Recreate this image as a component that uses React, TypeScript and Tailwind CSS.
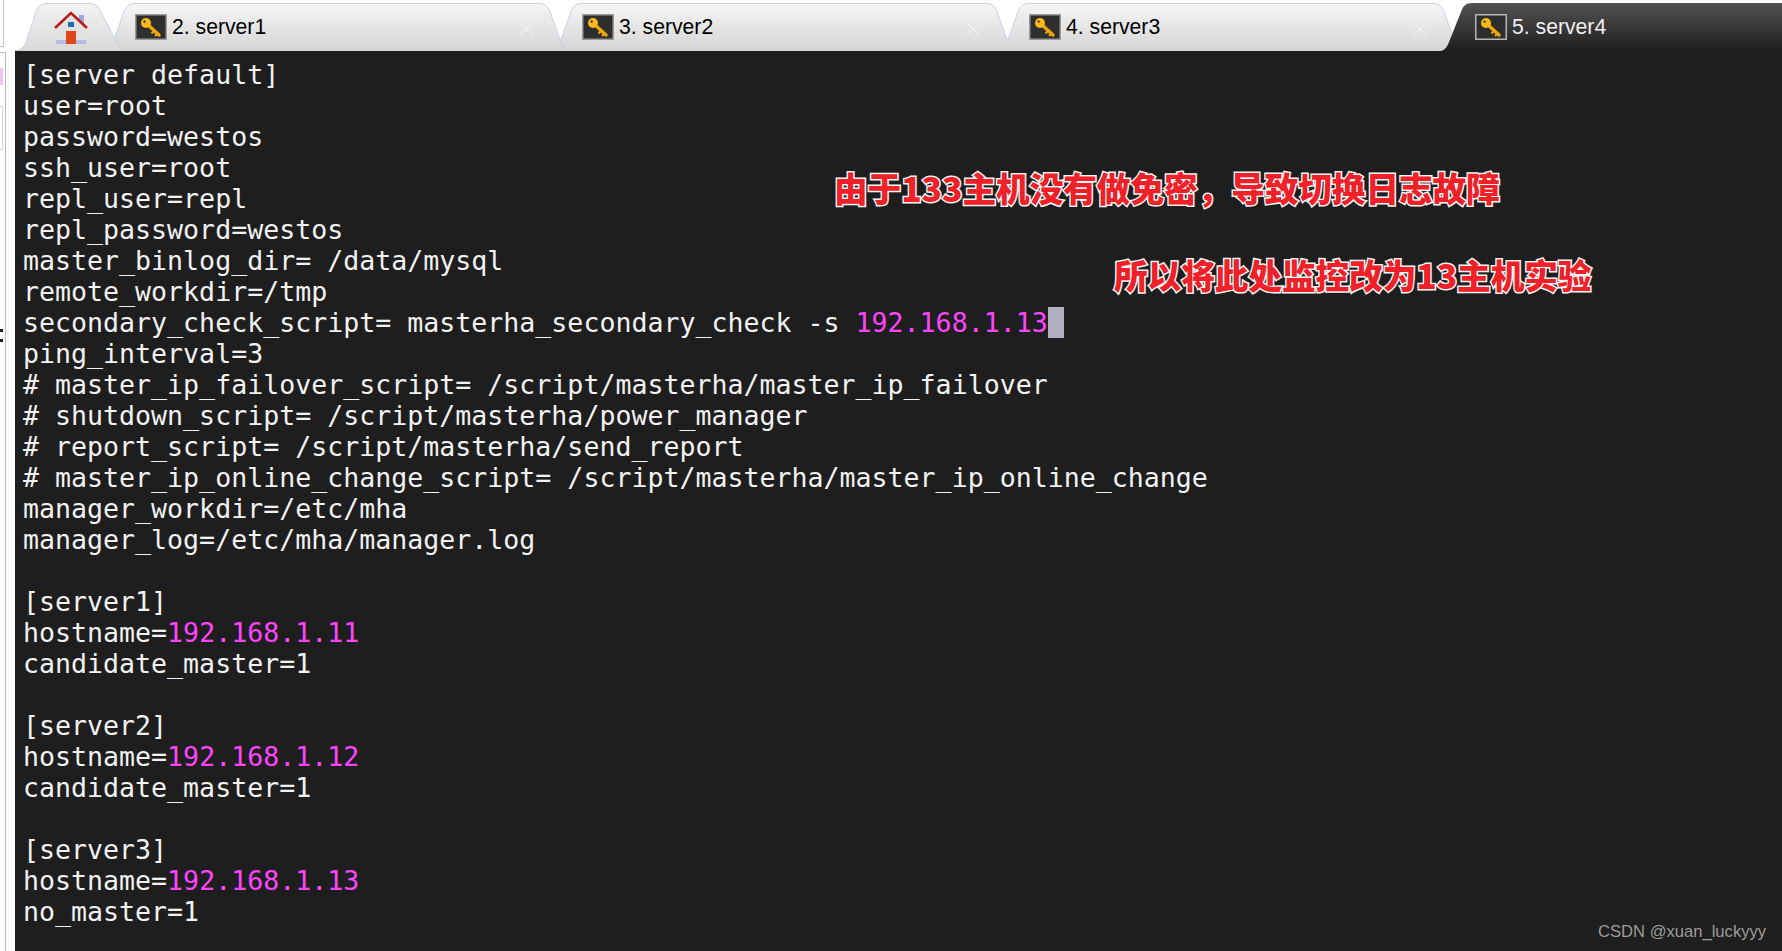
const lines: (string | [string, string])[] = [
  "[server default]",
  "user=root",
  "password=westos",
  "ssh_user=root",
  "repl_user=repl",
  "repl_password=westos",
  "master_binlog_dir= /data/mysql",
  "remote_workdir=/tmp",
  ["secondary_check_script= masterha_secondary_check -s ", "192.168.1.13"],
  "ping_interval=3",
  "# master_ip_failover_script= /script/masterha/master_ip_failover",
  "# shutdown_script= /script/masterha/power_manager",
  "# report_script= /script/masterha/send_report",
  "# master_ip_online_change_script= /script/masterha/master_ip_online_change",
  "manager_workdir=/etc/mha",
  "manager_log=/etc/mha/manager.log",
  "",
  "[server1]",
  ["hostname=", "192.168.1.11"],
  "candidate_master=1",
  "",
  "[server2]",
  ["hostname=", "192.168.1.12"],
  "candidate_master=1",
  "",
  "[server3]",
  ["hostname=", "192.168.1.13"],
  "no_master=1",
];

function KeyIcon({ active }: { active?: boolean }) {
  return (
    <svg width="32" height="26" viewBox="0 0 32 26" className="shrink-0">
      <rect x="0.75" y="0.75" width="30.5" height="24.5" fill="#2e2e2e" stroke={active ? "#b5b5b5" : "#9a9a9a"} strokeWidth="1.5" />
      <path d="M12 10 L24 21" stroke="#f0a808" strokeWidth="3.4" strokeLinecap="round" fill="none" />
      <path d="M19 17 L16.5 19.5 M22 20 L20 22" stroke="#f0a808" strokeWidth="2" fill="none" />
      <circle cx="11" cy="9" r="5" fill="#fbb81c" />
      <circle cx="9.6" cy="7.6" r="1.2" fill="#3a3a2e" />
    </svg>
  );
}

function HomeIcon() {
  return (
    <svg width="34" height="34" viewBox="0 0 34 34">
      <rect x="25" y="4" width="5" height="10" fill="#a5a8de" />
      <path d="M3 15 L17 3 L31 15 V33 H3 Z" fill="#e2e2e2" />
      <rect x="2" y="29" width="30" height="4" fill="#b4bce6" />
      <path d="M1 17 L17 2 L33 17" fill="none" stroke="#b91c1c" strokeWidth="2.6" />
      <rect x="14" y="11" width="6" height="5" fill="#1d6fb0" />
      <rect x="12" y="20" width="10" height="13" fill="#e0481a" />
    </svg>
  );
}

function Tab({ label, z }: { label: string; z: string }) {
  return (
    <div className={`relative h-12 w-[474px] shrink-0 -mr-[27px] flex items-center pl-[35px] pb-[1px] gap-[5px] ${z}`}>
      <svg className="absolute inset-0" width="474" height="48" viewBox="0 0 474 48">
        <defs>
          <linearGradient id="tabfill" x1="0" y1="0" x2="0" y2="1">
            <stop offset="0" stopColor="#f6f6f6" />
            <stop offset="1" stopColor="#d5d5d5" />
          </linearGradient>
        </defs>
        <path
          d="M0 48 C8 47 11 44 13 39 L24 9 C26 3 29 0.5 35 0.5 H439 C445 0.5 448 3 450 9 L461 39 C463 44 466 47 474 48 Z"
          fill="url(#tabfill)"
          stroke="#c9d3e0"
        />
      </svg>
      <div className="relative shrink-0"><KeyIcon /></div>
      <span className="relative text-[21.2px] leading-none text-black">{label}</span>
      <svg className="absolute left-[416px] top-[18px]" width="20" height="16" viewBox="0 0 20 16">
        <path d="M3 1 L17 15 M17 1 L3 15" stroke="#f4f4f4" strokeWidth="1" />
      </svg>
    </div>
  );
}

export default function App() {
  return (
    <div className="relative h-[951px] w-[1782px] overflow-hidden bg-white font-['Liberation_Sans',sans-serif]">
      <div className="flex h-[51px] items-end overflow-hidden">
        <div className="relative z-50 ml-[15px] -mr-[28px] flex h-12 w-[113px] shrink-0 items-center justify-center">
          <svg className="absolute inset-0" width="113" height="48" viewBox="0 0 113 48">
            <defs>
              <linearGradient id="homefill" x1="0" y1="0" x2="0" y2="1">
                <stop offset="0" stopColor="#f3f3f3" />
                <stop offset="1" stopColor="#d9d9d9" />
              </linearGradient>
            </defs>
            <path
              d="M0 48 C6 47 9 44 11 39 L21 9 C23 3 26 0.5 32 0.5 H75 C80 0.5 83 3 86 9 L100 36 C103 42 106 47 113 48 Z"
              fill="url(#homefill)"
              stroke="#c9d3e0"
            />
          </svg>
          <div className="relative -ml-[1px] mt-[1px]"><HomeIcon /></div>
        </div>
        <Tab label="2. server1" z="z-30" />
        <Tab label="3. server2" z="z-20" />
        <Tab label="4. server3" z="z-10" />
        <div className="relative z-40 flex h-12 flex-1 items-center gap-[5px] pb-[1px] pl-[34px]">
          <svg className="absolute inset-0" width="341" height="48" viewBox="0 0 341 48">
            <defs>
              <linearGradient id="darkfill" x1="0" y1="0" x2="0" y2="1">
                <stop offset="0" stopColor="#525252" />
                <stop offset="1" stopColor="#1e1e1e" />
              </linearGradient>
            </defs>
            <path d="M0 48 C4 47 6 44 8 39 L20 9 C22 3 25 0 31 0 H341 V48 Z" fill="url(#darkfill)" />
          </svg>
          <div className="relative shrink-0"><KeyIcon active /></div>
          <span className="relative text-[21.2px] leading-none text-[#f0f0f0]">5. server4</span>
        </div>
      </div>

      <main className="ml-[15px] h-[900px] bg-[#1e1e1e] pl-2 pt-2 font-['DejaVu_Sans_Mono',monospace] text-[26.6px] leading-[31px] text-[#f2f2f2]">
        {lines.map((l, i) =>
          typeof l === "string" ? (
            <div key={i} className="h-[31px] whitespace-pre">{l}</div>
          ) : (
            <div key={i} className="flex h-[31px] whitespace-pre">
              <span>{l[0]}</span>
              <span className="text-[#ff44ff]">{l[1]}</span>
              {i === 8 && <span className="h-[31px] w-4 bg-[#b1b1c3]" />}
            </div>
          )
        )}
      </main>

      {/* slivers of the window behind the terminal */}
      <div className="absolute left-0 top-0 h-[47px] w-[4px] border-b border-r border-[#c4c4c4]" />
      <div className="absolute left-0 top-[52px] h-[899px] w-[6px] border-r border-t border-[#bdbdbd]" />
      <div className="absolute left-0 top-[68px] h-[17px] w-[3px] bg-[#f3c4ee]" />
      <div className="absolute left-0 top-[106px] h-[44px] w-[3px] border-b border-r border-t border-[#d0d0d0]" />
      <div className="absolute left-0 top-[329px] h-[3px] w-[3px] bg-[#222222]" />
      <div className="absolute left-0 top-[339px] h-[3px] w-[3px] bg-[#222222]" />

      <div className="absolute left-[834px] top-[165px] whitespace-nowrap font-['Noto_Sans_CJK_SC',sans-serif] text-[33.6px] font-black leading-[46px] text-[#ee2028] [-webkit-text-stroke:3px_#f4f4f4] [paint-order:stroke_fill]">
        由于133主机没有做免密，导致切换日志故障
      </div>
      <div className="absolute left-[1114px] top-[252px] whitespace-nowrap font-['Noto_Sans_CJK_SC',sans-serif] text-[33.6px] font-black leading-[46px] text-[#ee2028] [-webkit-text-stroke:3px_#f4f4f4] [paint-order:stroke_fill]">
        所以将此处监控改为13主机实验
      </div>
      <div className="absolute left-[1598px] top-[922px] whitespace-nowrap text-[16.6px] leading-5 text-[#9c9c9c]">
        CSDN @xuan_luckyyy
      </div>
    </div>
  );
}
